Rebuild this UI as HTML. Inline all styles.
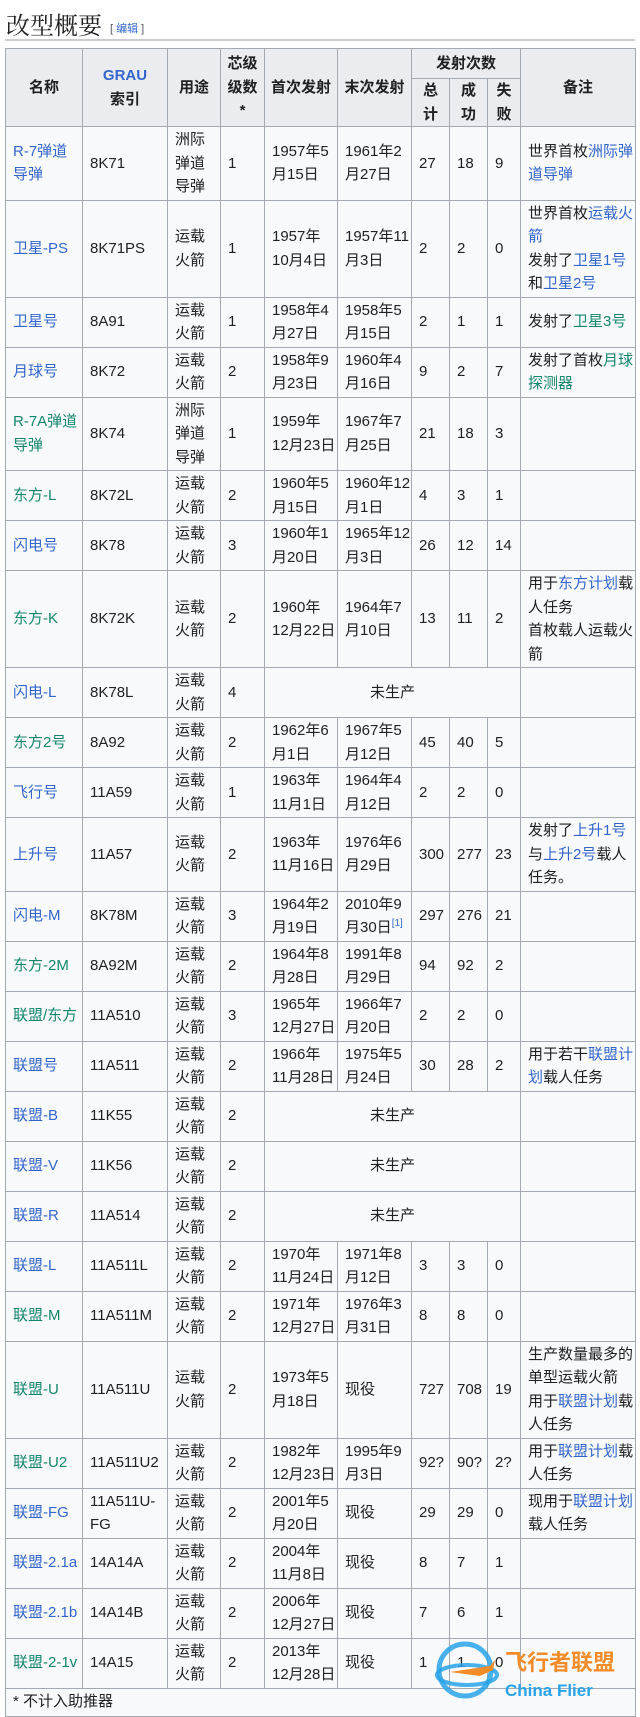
<!DOCTYPE html>
<html><head><meta charset="utf-8"><style>
body{margin:0;background:#fff;font-family:"Liberation Sans","Noto Sans CJK SC",sans-serif;color:#202122;}
h2{position:absolute;left:6px;top:6px;margin:0;font-weight:normal;font-size:24px;font-family:"Liberation Serif","Noto Serif CJK SC",serif;color:#202122;}
h2 span{font-size:11px;color:#54595d;font-family:"Liberation Sans","Noto Sans CJK SC",sans-serif;margin-left:8px;vertical-align:middle}
h2 span a{color:#3366cc}
.rule{position:absolute;left:5px;top:39px;width:630px;height:2px;background:#c8ccd1}
table{position:absolute;left:5px;top:48px;width:630px;border-collapse:collapse;font-size:15px;line-height:23.5px;background:#f8f9fa;table-layout:fixed}
td,th{border:1px solid #a2a9b1;padding:1px 0 1px 7px;white-space:nowrap;vertical-align:middle;text-align:left}
th{background:#eaecf0;font-weight:bold;text-align:center;padding:0}
a{color:#3366cc;text-decoration:none}
.g{color:#14866d}
.c{text-align:center;padding:0}
sup{font-size:10px;line-height:0}
.wm{position:absolute;left:435px;top:1640px;width:205px;height:70px}
</style></head><body>
<h2>改型概要<span>[ <a>编辑</a> ]</span></h2>
<div class="rule"></div>
<table>
<colgroup><col style="width:77px"><col style="width:85px"><col style="width:53px"><col style="width:44px"><col style="width:73px"><col style="width:74px"><col style="width:38px"><col style="width:38px"><col style="width:33px"><col style="width:115px"></colgroup>
<tr style="height:30px"><th rowspan="2">名称</th><th rowspan="2"><a>GRAU</a><br>索引</th><th rowspan="2">用途</th><th rowspan="2">芯级<br>级数<br>*</th><th rowspan="2">首次发射</th><th rowspan="2">末次发射</th><th colspan="3">发射次数</th><th rowspan="2">备注</th></tr>
<tr style="height:48px"><th>总<br>计</th><th>成<br>功</th><th>失<br>败</th></tr>
<tr><td><a>R-7弹道<br>导弹</a></td><td>8K71</td><td>洲际<br>弹道<br>导弹</td><td>1</td><td>1957年5<br>月15日</td><td>1961年2<br>月27日</td><td>27</td><td>18</td><td>9</td><td>世界首枚<a>洲际弹<br>道导弹</a></td></tr>
<tr><td><a>卫星-PS</a></td><td>8K71PS</td><td>运载<br>火箭</td><td>1</td><td>1957年<br>10月4日</td><td>1957年11<br>月3日</td><td>2</td><td>2</td><td>0</td><td>世界首枚<a>运载火<br>箭</a><br>发射了<a>卫星1号</a><br>和<a>卫星2号</a></td></tr>
<tr><td><a>卫星号</a></td><td>8A91</td><td>运载<br>火箭</td><td>1</td><td>1958年4<br>月27日</td><td>1958年5<br>月15日</td><td>2</td><td>1</td><td>1</td><td>发射了<a class="g">卫星3号</a></td></tr>
<tr><td><a>月球号</a></td><td>8K72</td><td>运载<br>火箭</td><td>2</td><td>1958年9<br>月23日</td><td>1960年4<br>月16日</td><td>9</td><td>2</td><td>7</td><td>发射了首枚<a class="g">月球<br>探测器</a></td></tr>
<tr><td><a class="g">R-7A弹道<br>导弹</a></td><td>8K74</td><td>洲际<br>弹道<br>导弹</td><td>1</td><td>1959年<br>12月23日</td><td>1967年7<br>月25日</td><td>21</td><td>18</td><td>3</td><td></td></tr>
<tr><td><a class="g">东方-L</a></td><td>8K72L</td><td>运载<br>火箭</td><td>2</td><td>1960年5<br>月15日</td><td>1960年12<br>月1日</td><td>4</td><td>3</td><td>1</td><td></td></tr>
<tr><td><a>闪电号</a></td><td>8K78</td><td>运载<br>火箭</td><td>3</td><td>1960年1<br>月20日</td><td>1965年12<br>月3日</td><td>26</td><td>12</td><td>14</td><td></td></tr>
<tr><td><a class="g">东方-K</a></td><td>8K72K</td><td>运载<br>火箭</td><td>2</td><td>1960年<br>12月22日</td><td>1964年7<br>月10日</td><td>13</td><td>11</td><td>2</td><td>用于<a>东方计划</a>载<br>人任务<br>首枚载人运载火<br>箭</td></tr>
<tr><td><a>闪电-L</a></td><td>8K78L</td><td>运载<br>火箭</td><td>4</td><td colspan="5" class="c">未生产</td><td></td></tr>
<tr><td><a class="g">东方2号</a></td><td>8A92</td><td>运载<br>火箭</td><td>2</td><td>1962年6<br>月1日</td><td>1967年5<br>月12日</td><td>45</td><td>40</td><td>5</td><td></td></tr>
<tr><td><a>飞行号</a></td><td>11A59</td><td>运载<br>火箭</td><td>1</td><td>1963年<br>11月1日</td><td>1964年4<br>月12日</td><td>2</td><td>2</td><td>0</td><td></td></tr>
<tr><td><a>上升号</a></td><td>11A57</td><td>运载<br>火箭</td><td>2</td><td>1963年<br>11月16日</td><td>1976年6<br>月29日</td><td>300</td><td>277</td><td>23</td><td>发射了<a>上升1号</a><br>与<a>上升2号</a>载人<br>任务。</td></tr>
<tr><td><a>闪电-M</a></td><td>8K78M</td><td>运载<br>火箭</td><td>3</td><td>1964年2<br>月19日</td><td>2010年9<br>月30日<sup><a>[1]</a></sup></td><td>297</td><td>276</td><td>21</td><td></td></tr>
<tr><td><a class="g">东方-2M</a></td><td>8A92M</td><td>运载<br>火箭</td><td>2</td><td>1964年8<br>月28日</td><td>1991年8<br>月29日</td><td>94</td><td>92</td><td>2</td><td></td></tr>
<tr><td><a class="g">联盟/东方</a></td><td>11A510</td><td>运载<br>火箭</td><td>3</td><td>1965年<br>12月27日</td><td>1966年7<br>月20日</td><td>2</td><td>2</td><td>0</td><td></td></tr>
<tr><td><a>联盟号</a></td><td>11A511</td><td>运载<br>火箭</td><td>2</td><td>1966年<br>11月28日</td><td>1975年5<br>月24日</td><td>30</td><td>28</td><td>2</td><td>用于若干<a>联盟计<br>划</a>载人任务</td></tr>
<tr><td><a>联盟-B</a></td><td>11K55</td><td>运载<br>火箭</td><td>2</td><td colspan="5" class="c">未生产</td><td></td></tr>
<tr><td><a>联盟-V</a></td><td>11K56</td><td>运载<br>火箭</td><td>2</td><td colspan="5" class="c">未生产</td><td></td></tr>
<tr><td><a>联盟-R</a></td><td>11A514</td><td>运载<br>火箭</td><td>2</td><td colspan="5" class="c">未生产</td><td></td></tr>
<tr><td><a>联盟-L</a></td><td>11A511L</td><td>运载<br>火箭</td><td>2</td><td>1970年<br>11月24日</td><td>1971年8<br>月12日</td><td>3</td><td>3</td><td>0</td><td></td></tr>
<tr><td><a class="g">联盟-M</a></td><td>11A511M</td><td>运载<br>火箭</td><td>2</td><td>1971年<br>12月27日</td><td>1976年3<br>月31日</td><td>8</td><td>8</td><td>0</td><td></td></tr>
<tr><td><a class="g">联盟-U</a></td><td>11A511U</td><td>运载<br>火箭</td><td>2</td><td>1973年5<br>月18日</td><td>现役</td><td>727</td><td>708</td><td>19</td><td>生产数量最多的<br>单型运载火箭<br>用于<a>联盟计划</a>载<br>人任务</td></tr>
<tr><td><a class="g">联盟-U2</a></td><td>11A511U2</td><td>运载<br>火箭</td><td>2</td><td>1982年<br>12月23日</td><td>1995年9<br>月3日</td><td>92?</td><td>90?</td><td>2?</td><td>用于<a>联盟计划</a>载<br>人任务</td></tr>
<tr><td><a>联盟-FG</a></td><td>11A511U-<br>FG</td><td>运载<br>火箭</td><td>2</td><td>2001年5<br>月20日</td><td>现役</td><td>29</td><td>29</td><td>0</td><td>现用于<a>联盟计划</a><br>载人任务</td></tr>
<tr><td><a>联盟-2.1a</a></td><td>14A14A</td><td>运载<br>火箭</td><td>2</td><td>2004年<br>11月8日</td><td>现役</td><td>8</td><td>7</td><td>1</td><td></td></tr>
<tr><td><a>联盟-2.1b</a></td><td>14A14B</td><td>运载<br>火箭</td><td>2</td><td>2006年<br>12月27日</td><td>现役</td><td>7</td><td>6</td><td>1</td><td></td></tr>
<tr><td><a class="g">联盟-2-1v</a></td><td>14A15</td><td>运载<br>火箭</td><td>2</td><td>2013年<br>12月28日</td><td>现役</td><td>1</td><td>1</td><td>0</td><td></td></tr>
<tr style="height:28px"><td colspan="10" style="padding-left:7px">* 不计入助推器</td></tr>
</table>
<svg class="wm" viewBox="0 0 205 70">
<ellipse cx="30" cy="30" rx="26" ry="26" fill="none" stroke="#29a3e8" stroke-width="5" opacity="0.85"/>
<ellipse cx="32" cy="35" rx="30" ry="10" fill="none" stroke="#29a3e8" stroke-width="4" opacity="0.85"/>
<path d="M15 32 L55 26 L60 20 L58 30 L45 36 Z" fill="#f28c28"/>
<text x="70" y="30" font-size="22" font-weight="bold" fill="#f28c28" font-family="Noto Sans CJK SC,sans-serif">飞行者联盟</text>
<text x="70" y="56" font-size="17" font-weight="bold" fill="#29a3e8" font-family="Liberation Sans,sans-serif">China Flier</text>
</svg>
</body></html>
